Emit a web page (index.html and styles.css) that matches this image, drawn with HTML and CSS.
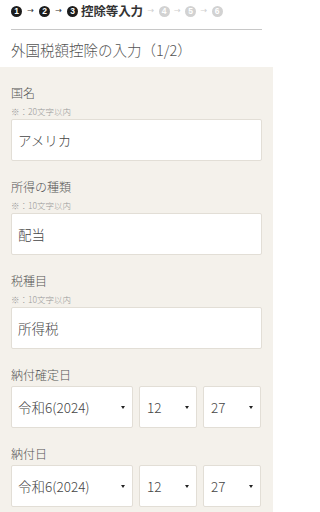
FILE: index.html
```html
<!DOCTYPE html>
<html lang="ja">
<head>
<meta charset="utf-8">
<title>外国税額控除の入力</title>
<link rel="stylesheet" href="styles.css">
</head>
<body>
<div class="page">
<div class="steps">
  <span class="num done">1</span><span class="arr done">→</span><span class="num done">2</span><span class="arr done">→</span><span class="num done">3</span><span class="step-label">控除等入力</span><span class="arr next">→</span><span class="num next">4</span><span class="arr next">→</span><span class="num next">5</span><span class="arr next">→</span><span class="num next">6</span>
</div>
<div class="rule"></div>
<h1 class="title">外国税額控除の入力（1/2）</h1>
<div class="form">
  <div class="field">
    <div class="label">国名</div>
    <div class="note">※：20文字以内</div>
    <div class="input">アメリカ</div>
  </div>
  <div class="field">
    <div class="label">所得の種類</div>
    <div class="note">※：10文字以内</div>
    <div class="input">配当</div>
  </div>
  <div class="field">
    <div class="label">税種目</div>
    <div class="note">※：10文字以内</div>
    <div class="input">所得税</div>
  </div>
  <div class="field">
    <div class="label">納付確定日</div>
    <div class="date-row">
      <div class="select"><span>令和6(2024)</span><i class="caret"></i></div>
      <div class="select"><span>12</span><i class="caret"></i></div>
      <div class="select"><span>27</span><i class="caret"></i></div>
    </div>
  </div>
  <div class="field last">
    <div class="label">納付日</div>
    <div class="date-row">
      <div class="select"><span>令和6(2024)</span><i class="caret"></i></div>
      <div class="select"><span>12</span><i class="caret"></i></div>
      <div class="select"><span>27</span><i class="caret"></i></div>
    </div>
  </div>
</div>
</div>
</body>
</html>
```
FILE: styles.css
```css
* { box-sizing: border-box; }
html, body { margin: 0; padding: 0; background: #ffffff; }
body {
  font-family: "Noto Sans CJK JP", "Noto Sans", sans-serif;
  color: #555;
  overflow: hidden;
}
.page {
  width: 273px;
  height: 512px;
  overflow: hidden;
}
.steps {
  height: 22px;
  padding: 0 11px;
  display: flex;
  align-items: center;
}
.num {
  width: 11px;
  height: 11px;
  border-radius: 50%;
  display: inline-flex;
  align-items: center;
  justify-content: center;
  font-family: "Liberation Sans", sans-serif;
  font-weight: 700;
  font-size: 8.5px;
  line-height: 1;
  color: #fff;
  flex: none;
}
.num.done { background: #1c1c1c; }
.num.next { background: #d2d2d2; }
.arr {
  width: 17px;
  text-align: center;
  font-family: "DejaVu Sans", sans-serif;
  font-size: 8px;
  line-height: 1;
  flex: none;
}
.arr.done { color: #333; }
.arr.next { color: #cfcfcf; width: 15.5px; }
.step-label {
  margin-left: 3px;
  font-size: 12.5px;
  font-weight: 700;
  color: #333;
  line-height: 1;
  letter-spacing: -0.1px;
}
.rule {
  margin: 7px 11px 0;
  border-top: 1px solid #c8c8c8;
}
.title {
  margin: 0;
  padding: 10px 11px 7px;
  font-size: 14.5px;
  font-weight: 300;
  line-height: 20px;
  color: #555;
}
.form {
  background: #f4f1eb;
  padding: 17px 11px 5px;
}
.field { margin-bottom: 17px; }
.field.last { margin-bottom: 0; }
.label {
  font-size: 12px;
  font-weight: 300;
  line-height: 18px;
  color: #555;
}
.note {
  margin-top: 2px;
  font-size: 8.5px;
  font-weight: 300;
  line-height: 15px;
  color: #999;
}
.input {
  height: 42px;
  background: #fff;
  border: 1px solid #e2ded6;
  border-radius: 2px;
  padding: 0 6px;
  display: flex;
  align-items: center;
  font-size: 13.5px;
  font-weight: 300;
  color: #444;
}
.date-row {
  margin-top: 2px;
  display: grid;
  grid-template-columns: 122px 58px 58px;
  gap: 6px;
}
.select {
  height: 42px;
  background: #fff;
  border: 1px solid #e2ded6;
  border-radius: 2px;
  padding: 0 7px 0 6px;
  display: flex;
  align-items: center;
  justify-content: space-between;
  font-size: 13.5px;
  font-weight: 300;
  color: #444;
}
.select + .select { padding-left: 7px; }
.caret {
  width: 0;
  height: 0;
  border-left: 2.5px solid transparent;
  border-right: 2.5px solid transparent;
  border-top: 3.5px solid #222;
}
```
